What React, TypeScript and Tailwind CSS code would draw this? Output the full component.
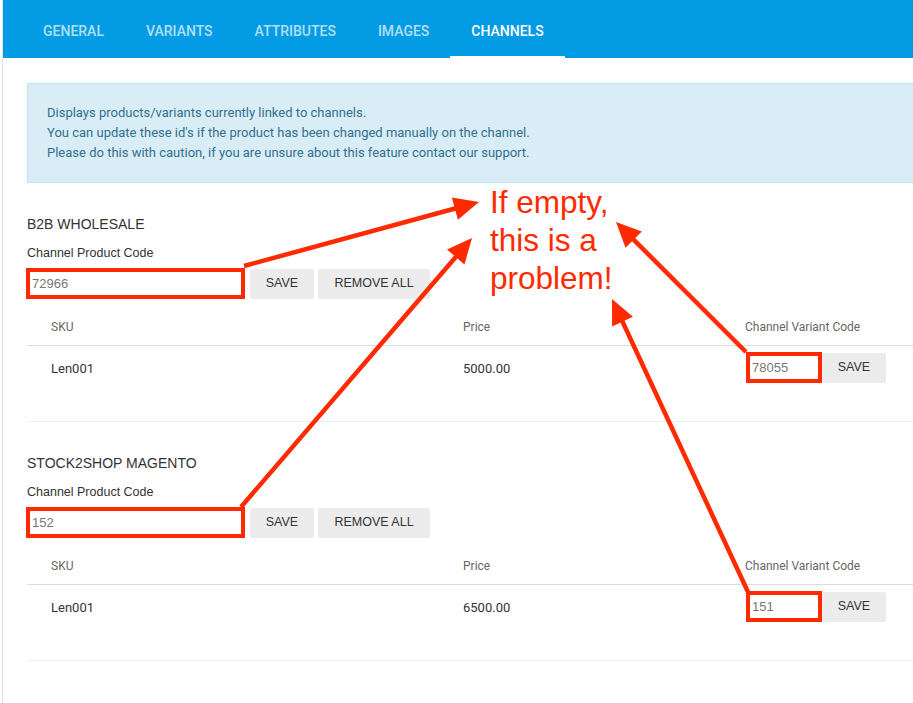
import type { ReactNode } from "react";

const tabs = ["General", "Variants", "Attributes", "Images", "Channels"];

type Channel = {
  title: string;
  productCode: string;
  sku: string;
  price: string;
  variantCode: string;
};

const channels: Channel[] = [
  { title: "B2B WHOLESALE", productCode: "72966", sku: "Len001", price: "5000.00", variantCode: "78055" },
  { title: "STOCK2SHOP MAGENTO", productCode: "152", sku: "Len001", price: "6500.00", variantCode: "151" },
];

const arial = "font-['Liberation_Sans',Arial,sans-serif]";
const RED = "#ff2a00";

function GrayButton({ children, className }: { children: ReactNode; className?: string }) {
  return (
    <button
      className={`flex h-[30px] items-center justify-center rounded-[2px] bg-[#ececec] text-[12.5px] text-[#333] ${arial} ${className ?? ""}`}
    >
      {children}
    </button>
  );
}

function ChannelSection({ channel }: { channel: Channel }) {
  return (
    <div className="mt-[31px]">
      <div className={`h-[20px] text-[14px] leading-[20px] text-[#333] ${arial}`}>{channel.title}</div>
      <div className={`mt-[10px] h-[18px] text-[12.5px] leading-[18px] text-[#333] ${arial}`}>Channel Product Code</div>
      <div className="mt-[6px] flex h-[31px] items-center">
        <div className="-ml-px flex h-[31px] w-[219px] items-center border-4 border-[#ff2a00] bg-white">
          <span className={`pl-[2px] text-[13px] text-[#777] ${arial}`}>{channel.productCode}</span>
        </div>
        <GrayButton className="ml-[5px] w-[64px]">SAVE</GrayButton>
        <GrayButton className="ml-[4px] w-[112px]">REMOVE ALL</GrayButton>
      </div>
      <div className="mt-[10px] font-['Roboto',sans-serif]">
        <div className="grid h-[37px] grid-cols-[412px_282px_1fr] items-center border-b border-[#dcdcdc] text-[12px] text-[#666]">
          <div className="pl-6">SKU</div>
          <div className="pl-6">Price</div>
          <div className="pl-6">Channel Variant Code</div>
        </div>
        <div className="grid h-[76px] grid-cols-[412px_282px_1fr] items-start border-b border-[#eeeeee] pt-[6px] text-[13px] text-[#333]">
          <div className="pl-6 pt-[7px] leading-[20px]">{channel.sku}</div>
          <div className="pl-6 pt-[7px] leading-[20px]">{channel.price}</div>
          <div className="flex items-center pl-[25px]">
            <div className="flex h-[31px] w-[76px] items-center border-4 border-[#ff2a00] bg-white">
              <span className={`pl-[2px] text-[13px] text-[#777] ${arial}`}>{channel.variantCode}</span>
            </div>
            <GrayButton className="h-[29px] w-[64px]">SAVE</GrayButton>
          </div>
        </div>
      </div>
    </div>
  );
}

function arrow(x1: number, y1: number, x2: number, y2: number) {
  const len = Math.hypot(x2 - x1, y2 - y1);
  const ux = (x2 - x1) / len;
  const uy = (y2 - y1) / len;
  const head = 25;
  const half = 11.5;
  const bx = x2 - ux * head;
  const by = y2 - uy * head;
  const pts = [
    `${x2},${y2}`,
    `${bx - uy * half},${by + ux * half}`,
    `${bx + uy * half},${by - ux * half}`,
  ].join(" ");
  return { line: { x1, y1, x2: bx + ux * 4, y2: by + uy * 4 }, pts };
}

const arrows = [
  arrow(244, 266, 479, 202),
  arrow(241, 507, 472, 238),
  arrow(746, 352, 616, 222),
  arrow(748, 592, 612, 299),
];

export default function App() {
  return (
    <div className="relative min-h-[703px] w-full overflow-hidden bg-white">
      <div className="ml-[2px] min-h-[703px] border-l border-[#e2e2e2]">
        <div className="flex h-[58px] w-full items-stretch bg-[#049be5] pl-[19px] font-['Roboto',sans-serif]">
          {tabs.map((tab) => {
            const active = tab === "Channels";
            return (
              <div
                key={tab}
                className={`flex items-center border-b-2 px-[21px] pt-[6px] text-[14px] font-medium uppercase ${
                  active ? "border-white text-white" : "border-transparent text-white/70"
                }`}
              >
                {tab}
              </div>
            );
          })}
        </div>

        <div className="w-[960px] pl-6">
          <div className="mt-[25px] h-[100px] border border-[#bce8f1] bg-[#d9edf7] py-[19px] pl-[19px] font-['Roboto',sans-serif] text-[13px] leading-[20px] text-[#31708f]">
            <p>Displays products/variants currently linked to channels.</p>
            <p>You can update these id's if the product has been changed manually on the channel.</p>
            <p>Please do this with caution, if you are unsure about this feature contact our support.</p>
          </div>
          {channels.map((c) => (
            <ChannelSection key={c.title} channel={c} />
          ))}
        </div>
      </div>

      <div
        className={`pointer-events-none absolute left-[490px] top-[183px] text-[31.5px] leading-[38px] text-[#ff2a00] ${arial}`}
      >
        If empty,
        <br />
        this is a
        <br />
        problem!
      </div>

      <svg className="pointer-events-none absolute left-0 top-0" width="913" height="703">
        {arrows.map((a, i) => (
          <g key={i}>
            <line {...a.line} stroke={RED} strokeWidth={4.5} />
            <polygon points={a.pts} fill={RED} />
          </g>
        ))}
      </svg>
    </div>
  );
}
